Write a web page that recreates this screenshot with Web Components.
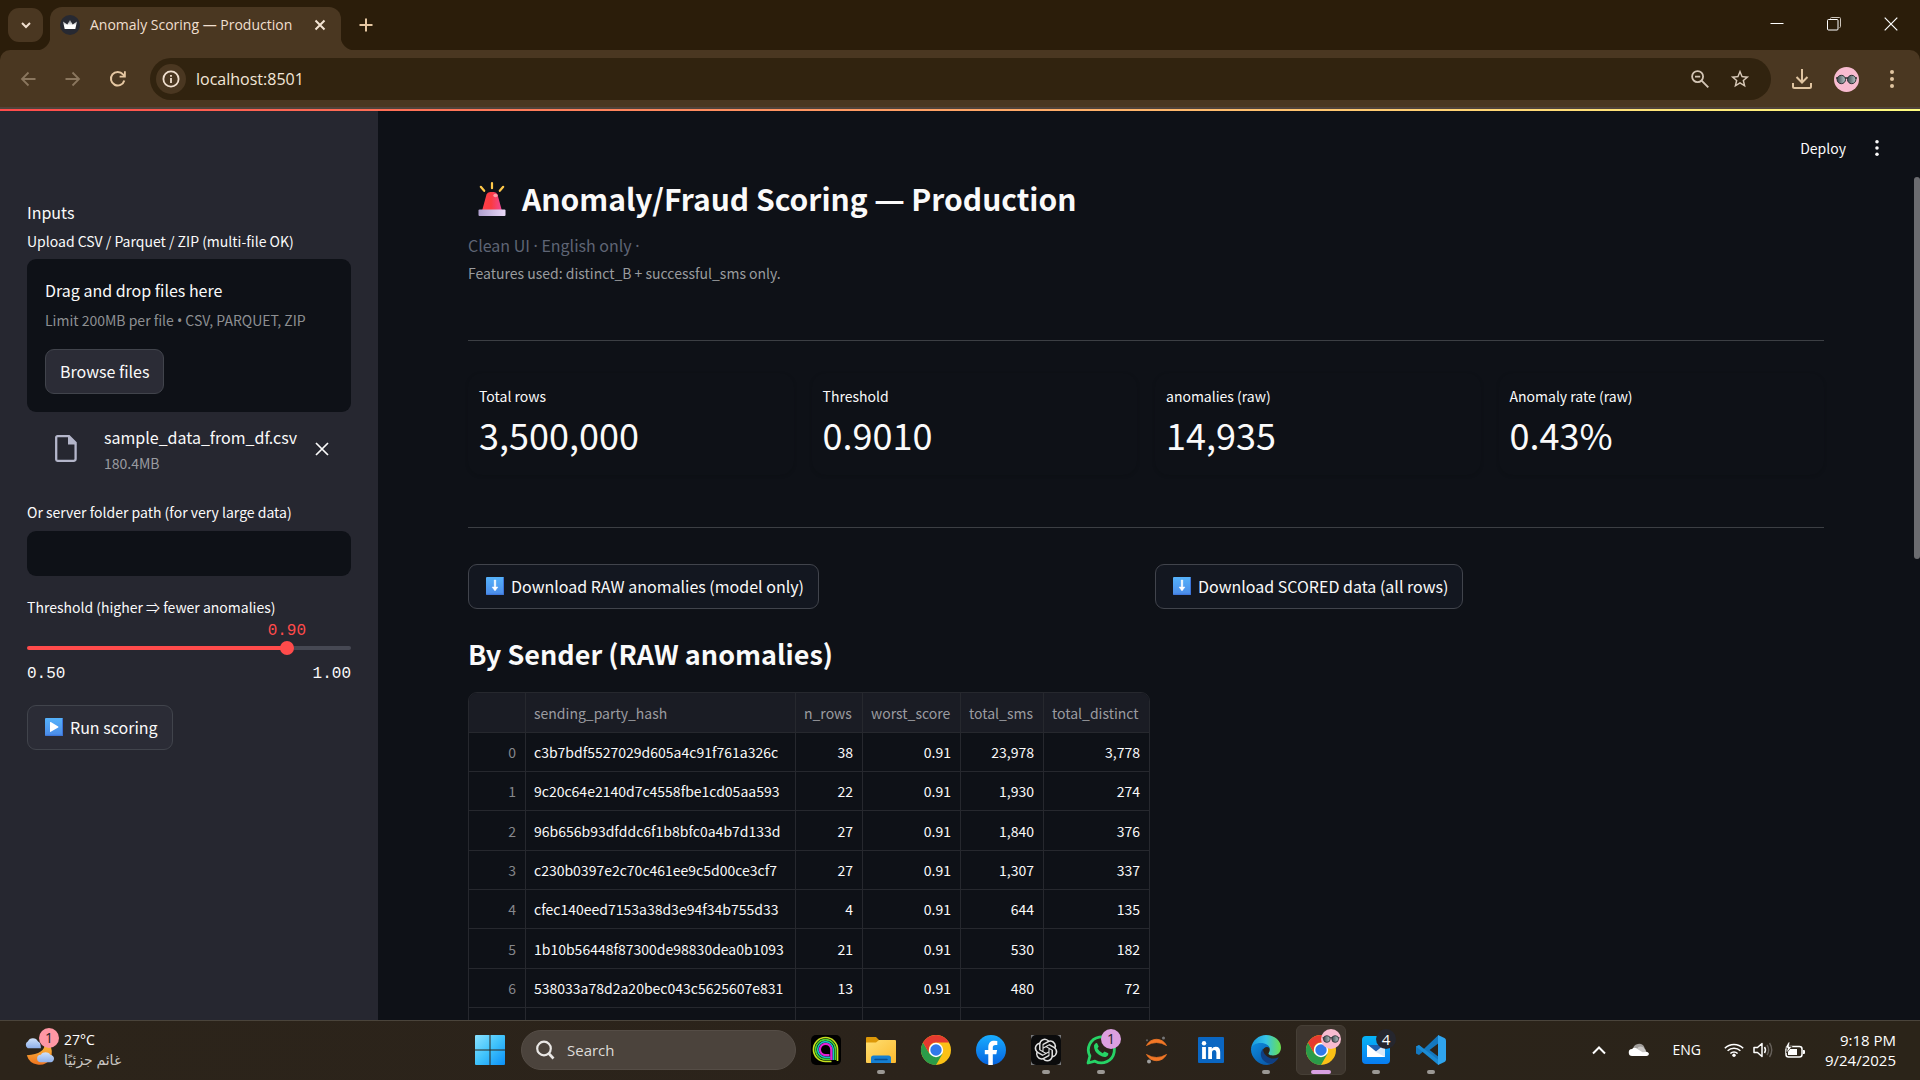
<!DOCTYPE html>
<html lang="en">
<head>
<meta charset="utf-8">
<title>Anomaly Scoring — Production</title>
<style>
  html, body { margin: 0; height: 100%; background: #0e1117; overflow: hidden; }
  body {
    --app-font: "Noto Sans CJK SC", "Open Sans", sans-serif;
    --os-font: "Open Sans", "Noto Sans", "DejaVu Sans", sans-serif;
    --mono-font: "Liberation Mono", "DejaVu Sans Mono", monospace;
    color: #fafafa;
    font-family: var(--app-font);
  }
</style>
</head>
<body>
<desktop-screen></desktop-screen>

<script>
const ICONS = {
  chevronDown: ['0 0 12 12', '<path d="M2 4l4 4 4-4" fill="none" stroke="#f0dfcf" stroke-width="2"/>'],
  crown: ['0 0 20 20', '<defs><linearGradient id="c" x2="0" y2="1"><stop offset="0" stop-color="#8a8f96"/><stop offset=".6" stop-color="#fff"/></linearGradient></defs><circle cx="10" cy="10" r="10" fill="#272932"/><path d="M3 6.500l4.300 3L10 5l2.700 4.500L17 6.500 15.300 14H4.700z" fill="url(#c)"/>'],
  tabClose: ['0 0 12 12', '<path d="M1.500 1.500l9 9m0-9l-9 9" stroke="#f4e4d4" stroke-width="2"/>'],
  plus: ['0 0 14 14', '<path d="M7 .5v13M.5 7h13" stroke="#e6c7a2" stroke-width="2"/>'],
  minimize: ['0 0 14 14', '<path d="M.5 6.500h13" stroke="#fff" stroke-width="1"/>'],
  restore: ['0 0 14 14', '<path d="M3.500 1.500a1 1 0 0 1 1-1h8a1 1 0 0 1 1 1v8a1 1 0 0 1-1 1" fill="none" stroke="#ccc4ba"/><rect x=".5" y="2.500" width="10.500" height="10.500" rx="1" fill="none" stroke="#fff"/>'],
  winClose: ['0 0 14 14', '<path d="M.7.7l12.600 12.600m0-12.600L.7 13.300" stroke="#fff" stroke-width="1.200"/>'],
  back: ['0 0 16 16', '<path d="M15.500 8H2m6.500-6.500L2 8l6.500 6.500" fill="none" stroke="#8a765e" stroke-width="1.800"/>'],
  forward: ['0 0 16 16', '<path d="M.5 8H14M7.500 1.500L14 8l-6.500 6.500" fill="none" stroke="#8a765e" stroke-width="1.800"/>'],
  reload: ['0 0 16 16', '<path d="M14.300 9.500A6.800 6.800 0 1 1 13 3.400l1.500 1.600" fill="none" stroke="#e6c7a2" stroke-width="2"/><path d="M15.800.3v6.200H9.600V4.700H14V.3z" fill="#e6c7a2"/>'],
  info: ['0 0 18 18', '<circle cx="9" cy="9" r="7.600" fill="none" stroke="#f0dfcf" stroke-width="1.800"/><path d="M8.100 8h1.800v5H8.100zm0-3h1.800v1.800H8.100z" fill="#f0dfcf"/>'],
  zoomOut: ['0 0 18 18', '<circle cx="6.600" cy="6.600" r="5.500" fill="none" stroke="#d3c5b5" stroke-width="1.800"/><path d="M4 6.600h5.200M10.600 10.600l6.700 6.700" stroke="#d3c5b5" stroke-width="1.900"/>'],
  star: ['0 0 24 24', '<path d="M22 9.240l-7.190-.62L12 2 9.190 8.630 2 9.240l5.460 4.730L5.820 21 12 17.270 18.180 21l-1.630-7.030L22 9.240zM12 15.400l-3.760 2.270 1-4.280-3.320-2.880 4.380-.38L12 6.100l1.710 4.040 4.380.38-3.320 2.880 1 4.280L12 15.400z" fill="#d8c9b8"/>'],
  download: ['0 0 20 20', '<path d="M10 0v13M4.500 8L10 13.500 15.500 8M1 14v3.500q0 1.500 1.500 1.500h15q1.500 0 1.500-1.500V14" fill="none" stroke="#e0c4a0" stroke-width="2"/>'],
  avatar: ['0 0 25 25', '<defs><linearGradient id="g"><stop offset="0" stop-color="#3e4b51"/><stop offset="1" stop-color="#b8c4c6"/></linearGradient></defs><circle cx="12.500" cy="12.500" r="12.500" fill="#f8bbd0"/><path d="M2 11h21" stroke="#333" stroke-width="1.500"/><circle cx="7.300" cy="12.500" r="4.200" fill="url(#g)" stroke="#2b2f33"/><circle cx="17.700" cy="12.500" r="4.200" fill="url(#g)" stroke="#2b2f33"/>'],
  dots: ['0 0 4 18', '<g fill="currentColor"><circle cx="2" cy="2" r="2"/><circle cx="2" cy="9" r="2"/><circle cx="2" cy="16" r="2"/></g>'],
  file: ['0 0 22 27', '<path d="M2.500 1.200H14l6.600 6.600v16a2 2 0 0 1-2 2H2.500a1.300 1.300 0 0 1-1.300-1.300v-22a1.300 1.300 0 0 1 1.300-1.300z" fill="none" stroke="#b4b6ca" stroke-width="2.300"/><path d="M13 1v8.500h8.500z" fill="#b4b6ca"/>'],
  remove: ['0 0 14 14', '<path d="M1 1l12 12M13 1L1 13" stroke="#fafafa" stroke-width="1.700"/>'],
  play: ['0 0 18 18', '<defs><linearGradient id="b" x2="0" y2="1"><stop offset="0" stop-color="#55b2fb"/><stop offset="1" stop-color="#4b8be8"/></linearGradient></defs><rect width="18" height="18" rx="1" fill="url(#b)"/><path d="M.5 17.300h17V.8" stroke="#3c73d8" fill="none"/><path d="M5 4.500q0-.9.8-.4l7.400 4.300q.7.500 0 1l-7.400 4.300q-.8.500-.8-.4z" fill="#fff"/>'],
  down: ['0 0 18 18', '<defs><linearGradient id="b" x2="0" y2="1"><stop offset="0" stop-color="#55b2fb"/><stop offset="1" stop-color="#4b8be8"/></linearGradient></defs><rect width="18" height="18" rx="1" fill="url(#b)"/><path d="M.5 17.300h17V.8" stroke="#3c73d8" fill="none"/><path d="M8.200 3h1.600v7h2.200L9 14 6 10h2.200z" fill="#fff" stroke="#fff" stroke-width=".4"/>'],
  siren: ['0 0 28 34', '<defs><linearGradient id="s"><stop offset="0" stop-color="#ff3f4a"/><stop offset=".45" stop-color="#fb3b40"/><stop offset="1" stop-color="#ef4796"/></linearGradient><linearGradient id="p"><stop offset="0" stop-color="#b0a0cf"/><stop offset="1" stop-color="#ead9f8"/></linearGradient></defs><path d="M14 1.200v5M2.800 4.800l3.400 4M25.200 4.800l-3.400 4" stroke="#ffc94a" stroke-width="2.200" stroke-linecap="round"/><path d="M8.500 12.500q.8-2.500 3.600-2.500h3.800q2.800 0 3.600 2.500L24 29H4z" fill="url(#s)"/><ellipse cx="17.500" cy="13.500" rx="2.200" ry="1.800" fill="#ff9ca4"/><rect x=".5" y="27.500" width="27" height="6.500" rx="1" fill="url(#p)"/>'],
  weather: ['0 0 32 32', '<defs><linearGradient id="w" x2="0" y2="1"><stop offset="0" stop-color="#cfe2fb"/><stop offset="1" stop-color="#8fb0ea"/></linearGradient><linearGradient id="m" x2="0" y2="1"><stop offset="0" stop-color="#fdbf3d"/><stop offset="1" stop-color="#ee7420"/></linearGradient></defs><path d="M22 9q1 11-19 12.500a14 14 0 0 0 25 4q4-8-1-16.500z" fill="url(#m)"/><path d="M4 14a4 4 0 0 1 0-7 6 6 0 0 1 11 0q3 1 3 7z" fill="url(#w)"/><path d="M18 29a4 4 0 0 1 0-8 6 6 0 0 1 10 0q4 1 4 4t-3 4z" fill="url(#w)"/>'],
  windows: ['0 0 30 30', '<defs><linearGradient id="n" gradientUnits="userSpaceOnUse" x2="30" y2="30"><stop offset="0" stop-color="#8be2ff"/><stop offset=".5" stop-color="#3fc2fb"/><stop offset="1" stop-color="#0b90f8"/></linearGradient></defs><path d="M0 1a1 1 0 0 1 1-1h13.500v14.500H0zM15.500 0H29a1 1 0 0 1 1 1v13.500H15.500zM0 15.500h14.500V30H1a1 1 0 0 1-1-1zM15.500 15.500H30V29a1 1 0 0 1-1 1H15.500z" fill="url(#n)"/>'],
  search: ['0 0 20 20', '<circle cx="9" cy="8.500" r="6.800" fill="none" stroke="#e9e7e5" stroke-width="2.200"/><path d="M13.800 13.500l4.700 5" stroke="#e9e7e5" stroke-width="2.600"/>'],
  anghami: ['0 0 30 30', '<rect width="30" height="30" rx="5" fill="#000"/><g fill="none" stroke-width="1.700"><path d="M26.500 26V14.500A12 12 0 1 0 14.500 26.500h6" stroke="#c6e21e"/><path d="M24.400 25V14.500a9.900 9.900 0 1 0-9.900 9.900h5" stroke="#49d432"/><path d="M22.300 25V14.500a7.800 7.800 0 1 0-7.800 7.800h5" stroke="#17bfc7"/><path d="M20.300 25V14.500a5.700 5.700 0 1 0-5.800 5.700h4" stroke="#e321d5" stroke-width="2.200"/></g>'],
  folder: ['0 0 30 26', '<defs><linearGradient id="f" x2="1" y2="1"><stop offset="0" stop-color="#ffdf72"/><stop offset="1" stop-color="#fbb92e"/></linearGradient></defs><path d="M0 1a1 1 0 0 1 1-1h9l3 3v6H0z" fill="#dd9808"/><path d="M0 5.500h10L13 3h16a1 1 0 0 1 1 1v21a1 1 0 0 1-1 1H1a1 1 0 0 1-1-1z" fill="url(#f)"/><path d="M5 26v-5q0-2.500 2.500-2.500h15q2.500 0 2.500 2.500v5z" fill="#157fd2"/><path d="M9 22.500h12" stroke="#084e91" stroke-width="1.500" stroke-linecap="round"/>'],
  chrome: ['0 0 30 30', '<circle cx="15" cy="15" r="15" fill="#fbc116"/><path d="M2 7.500a15 15 0 0 0 13 22.500l6.500-11.200L15 15 8.500 18.800z" fill="#2b9b49"/><path d="M2 7.500A15 15 0 0 1 28 7.500H15a7.500 7.500 0 0 0-7 5l-.3 5z" fill="#e53a2f"/><circle cx="15" cy="15" r="7.200" fill="#fff"/><circle cx="15" cy="15" r="5.700" fill="#3079ea"/>'],
  facebook: ['0 0 30 30', '<defs><linearGradient id="k" x2="0" y2="1"><stop offset="0" stop-color="#19adff"/><stop offset="1" stop-color="#0563e0"/></linearGradient></defs><circle cx="15" cy="15" r="15" fill="url(#k)"/><path d="M12.300 30V19.300H8.800v-4.400h3.500v-2.300c0-5.200 2.400-6.900 6-6.900q1.800 0 3 .3v3.900h-1.700c-2.200 0-2.800 1-2.800 2.700v2.300h4.300l-.8 4.400h-3.500V30z" fill="#fff"/>'],
  gpt: ['0 0 30 30', '<rect width="30" height="30" fill="#77787a"/><rect width="30" height="30" rx="5" fill="#0b0b0c"/><path transform="translate(3.600 3.600) scale(.95)" d="M22.2819 9.8211a5.9847 5.9847 0 0 0-.5157-4.9108 6.0462 6.0462 0 0 0-6.5098-2.9A6.0651 6.0651 0 0 0 4.9807 4.1818a5.9847 5.9847 0 0 0-3.9977 2.9 6.0462 6.0462 0 0 0 .7427 7.0966 5.98 5.98 0 0 0 .511 4.9107 6.051 6.051 0 0 0 6.5146 2.9001A5.9847 5.9847 0 0 0 13.2599 24a6.0557 6.0557 0 0 0 5.7718-4.2058 5.9894 5.9894 0 0 0 3.9977-2.9001 6.0557 6.0557 0 0 0-.7475-7.0729zm-9.022 12.6081a4.4755 4.4755 0 0 1-2.8764-1.0408l.1419-.0804 4.7783-2.7582a.7948.7948 0 0 0 .3927-.6813v-6.7369l2.02 1.1686a.071.071 0 0 1 .038.052v5.5826a4.504 4.504 0 0 1-4.4945 4.4944zm-9.6607-4.1254a4.4708 4.4708 0 0 1-.5346-3.0137l.142.0852 4.783 2.7582a.7712.7712 0 0 0 .7806 0l5.8428-3.3685v2.3324a.0804.0804 0 0 1-.0332.0615L9.74 19.9502a4.4992 4.4992 0 0 1-6.1408-1.6464zM2.3408 7.8956a4.485 4.485 0 0 1 2.3655-1.9728V11.6a.7664.7664 0 0 0 .3879.6765l5.8144 3.3543-2.0201 1.1685a.0757.0757 0 0 1-.071 0l-4.8303-2.7865A4.504 4.504 0 0 1 2.3408 7.872zm16.5963 3.8558L13.1038 8.364 15.1192 7.2a.0757.0757 0 0 1 .071 0l4.8303 2.7913a4.4944 4.4944 0 0 1-.6765 8.1042v-5.6772a.79.79 0 0 0-.407-.667zm2.0107-3.0231l-.142-.0852-4.7735-2.7818a.7759.7759 0 0 0-.7854 0L9.409 9.2297V6.8974a.0662.0662 0 0 1 .0284-.0615l4.8303-2.7866a4.4992 4.4992 0 0 1 6.6802 4.66zM8.3065 12.863l-2.02-1.1638a.0804.0804 0 0 1-.038-.0567V6.0742a4.4992 4.4992 0 0 1 7.3757-3.4537l-.142.0805L8.704 5.459a.7948.7948 0 0 0-.3927.6813zm1.0976-2.3654l2.602-1.4998 2.6069 1.4998v2.9994l-2.5974 1.4997-2.6067-1.4997Z" fill="#e2e2e2"/>'],
  whatsapp: ['0 0 30 30', '<path d="M2 28l1.900-7A13 13 0 1 1 9 26.200z" fill="none" stroke="#26d366" stroke-width="2.800" stroke-linejoin="round"/><path d="M8 10.500q1-3 3-2.500l1.700 3.600-1.200 2q2 3.500 5.200 4.700l1.800-1.900 3.800 1.900q.3 2.700-2.600 3.600-2.300.7-6.500-1.900-5.600-3.600-5.200-9.500z" fill="#26d366"/>'],
  jupyter: ['0 0 30 30', '<path d="M5.500 10.500Q9 4.300 15.500 4.300t10 6.200Q15.500 4.500 5.500 10.500zM5.500 19.500q3.500 6.200 10 6.200t10-6.200q-10 6-20 0z" fill="#f37726" stroke="#f37726" stroke-width=".8"/><circle cx="22.500" cy="3" r="1.500" fill="#767677"/><circle cx="8" cy="26.500" r="2" fill="#9e9e9e"/><circle cx="6" cy="5.300" r="1.100" fill="#616262"/>'],
  linkedin: ['0 0 26 26', '<rect width="26" height="26" rx="1" fill="#0a66c2"/><circle cx="6" cy="6.300" r="2.200" fill="#fff"/><path d="M4.100 10h3.800v12H4.100zM10.200 10h3.600v1.700q1.200-2 3.900-2 4.500 0 4.500 5.300v7h-3.800v-6.300q0-2.700-2-2.700-2.400 0-2.400 2.700V22h-3.800z" fill="#fff"/>'],
  edge: ['0 0 30 30', '<defs><linearGradient id="e"><stop offset="0" stop-color="#1798de"/><stop offset=".5" stop-color="#35c3e8"/><stop offset="1" stop-color="#6be04b"/></linearGradient><linearGradient id="d" x2="1" y2="1"><stop offset="0" stop-color="#0d8ce0"/><stop offset="1" stop-color="#094d9b"/></linearGradient></defs><path d="M0 14C1 5 8 0 15 0c9 0 15 6 15 12.500 0 5-3.600 8-8 8-3 0-5.200-1.200-4.300-2.600 3.100-4.500-.7-8.400-5.700-8.400S1 11 0 14z" fill="url(#e)"/><path d="M0 14c1-4 5-6 9.500-6 5.500 0 9 2.800 9 5.200-1.500-1.700-3.500-1.700-5.500 0-5 4.800.5 12.800 9 11.800 2-.3 4-1.200 5-2A15 15 0 0 1 16 30C7 30-.3 22 0 14z" fill="url(#d)"/><path d="M12 13.800c-5.500 6 0 15 8.500 15 3-1.300 6-3.800 7.300-6.600-8.500 4-15.800-2-15.800-8.400z" fill="#103f82"/>'],
  mail: ['0 0 28 28', '<defs><linearGradient id="q" x2="0" y2="1"><stop offset="0" stop-color="#06b4f6"/><stop offset="1" stop-color="#087cf1"/></linearGradient></defs><rect width="28" height="28" rx="4" fill="url(#q)"/><rect x="5" y="9" width="18" height="12" fill="#fff"/><path d="M14 16l9-7v12z" fill="#d9e8f7"/><path d="M6 9h16l-8 6.500z" fill="#1d5fb0"/>'],
  vscode: ['0 0 30 30', '<path d="M22.500 0L7.800 14 3 10.200 0 11.500v7L3 20l4.800-4L22.500 30v-8.300L13.600 15l8.900-6.700z" fill="#1478bf"/><path d="M3 10l19.500 15V30L0 11.500z" fill="#1b8bd4"/><path d="M22 0l6.500 3Q30 3.800 30 5.500v19q0 1.700-1.500 2.500L22 30z" fill="#2fa4ee"/>'],
  chevronUp: ['0 0 14 10', '<path d="M1 8.500l6-6 6 6" fill="none" stroke="#fff" stroke-width="2"/>'],
  cloud: ['0 0 20 14', '<path d="M4 7A6 6 0 0 1 15.500 4.500L12 9z" fill="#a09d9a"/><path d="M3.500 13a3.500 3.500 0 0 1-.5-7Q5 4 8 5.500l8 3q3.500 0 4 2.500-.5 2-2.500 2z" fill="#fff"/><path d="M8 5.700q2-3 5.500-1.700T17 9l-3.500.2z" fill="#c9c7c5"/>'],
  wifi: ['0 0 20 15', '<g fill="none" stroke="#fff" stroke-width="1.500"><path d="M.8 6.200a13 13 0 0 1 18.400 0M3.600 8.800a9 9 0 0 1 12.800 0M6.400 11.500a5 5 0 0 1 7.200 0"/></g><circle cx="10" cy="13.300" r="1.700" fill="#fff"/>'],
  speaker: ['0 0 20 16', '<path d="M1 5.500h3.500L9 1.500v13l-4.500-4H1z" fill="none" stroke="#fff" stroke-width="1.500" stroke-linejoin="round"/><path d="M11.500 5q2 3 0 6" fill="none" stroke="#fff" stroke-width="1.500"/><path d="M14 3q3.300 5 0 10M16.500 1q4.500 7 0 14" fill="none" stroke="#66605a" stroke-width="1.400"/>'],
  battery: ['0 0 20 16', '<rect x="1" y="4.500" width="16" height="10.500" rx="2.500" fill="none" stroke="#fff" stroke-width="1.500"/><path d="M18 8h1q1 0 1 1v2q0 1-1 1h-1zM3 7h9v6H3z" fill="#fff"/><path d="M3.500 0L0 6h2.500L1.500 11 7 4.500H4L5 0z" fill="#fff" stroke="#2b241a" stroke-width=".7"/>']
};

/* Base class: clones its template into an open shadow root. */
class BaseElement extends HTMLElement {
  constructor() {
    super();
    const t = document.createElement('template');
    t.innerHTML = '<style>*,*::before{box-sizing:border-box}button{font:inherit;color:inherit;background:none;border:0;padding:0;margin:0}' +
      this.constructor.css + '</style>' + this.constructor.html;
    this.attachShadow({ mode: 'open' }).append(t.content.cloneNode(true));
  }
}
const define = (tag, css, html) =>
  customElements.define(tag, class extends BaseElement { static css = css; static html = html; });

customElements.define('ui-icon', class extends HTMLElement {
  connectedCallback() {
    if (this.shadowRoot) return;
    const [box, body] = ICONS[this.getAttribute('name')];
    const [, , bw, bh] = box.split(' ');
    const w = this.getAttribute('w') || bw, h = this.getAttribute('h') || bh;
    this.attachShadow({ mode: 'open' }).innerHTML =
      `<style>:host{display:inline-block;flex:none;width:${w}px;height:${h}px}svg{display:block;width:100%;height:100%;overflow:visible}</style>` +
      `<svg viewBox="${box}" aria-hidden="true">${body}</svg>`;
  }
});

/* ---------- Browser window ---------- */
define('browser-tabs', `
  :host { display: flex; height: 50px; padding-left: 8px; background: #2b1d0a; font-family: var(--os-font); color: #f0dfcf; }
  .search { align-self: center; display: grid; place-items: center; width: 35px; height: 34px; border-radius: 11px; background: #4a3721; }
  .tab { position: relative; display: flex; align-items: center; gap: 10px; width: 291px; margin: 7px 0 0 7px; padding: 0 15px 7px 10px; border-radius: 12px 12px 0 0; background: #4a3721; }
  .tab::before, .tab::after { content: ""; position: absolute; bottom: 0; width: 14px; height: 14px; }
  .tab::before { right: 100%; background: radial-gradient(circle at 0 0, transparent 14px, #4a3721 15px); }
  .tab::after { left: 100%; background: radial-gradient(circle at 100% 0, transparent 14px, #4a3721 15px); }
  .title { flex: 1; font-size: 14px; line-height: 20px; white-space: nowrap; }
  .new { display: grid; place-items: center; width: 50px; }
  .win { display: flex; margin-left: auto; padding-right: 1px; }
  .win button { display: grid; place-items: center; width: 57px; height: 48px; }
`, `
  <button class="search" aria-label="Search tabs"><ui-icon name="chevronDown"></ui-icon></button>
  <div class="tab"><ui-icon name="crown"></ui-icon><span class="title"><slot></slot></span><button aria-label="Close tab"><ui-icon name="tabClose"></ui-icon></button></div>
  <button class="new" aria-label="New tab"><ui-icon name="plus"></ui-icon></button>
  <div class="win"><button aria-label="Minimize"><ui-icon name="minimize"></ui-icon></button><button aria-label="Restore"><ui-icon name="restore"></ui-icon></button><button aria-label="Close"><ui-icon name="winClose"></ui-icon></button></div>
`);

define('browser-toolbar', `
  :host { display: block; background: #2b1d0a; font-family: var(--os-font); }
  .bar { display: flex; align-items: center; height: 59px; padding: 1px 6px 0 5px; border-radius: 10px 10px 0 0; background: #4a3721; border-bottom: 2px solid #50433b; }
  .nav { display: grid; place-items: center; width: 45px; height: 42px; color: #e0c4a0; }
  .box { flex: 1; display: flex; align-items: center; height: 42px; margin: 0 13px 0 10px; padding: 0 13px 0 6px; border-radius: 21px; background: #31230f; }
  .info { display: grid; place-items: center; width: 30px; height: 30px; border-radius: 50%; background: #4a3721; }
  input { flex: 1; min-width: 0; margin-left: 10px; padding: 0; border: 0; outline: 0; background: none; color: #f3e6d8; font: 16px/22px var(--os-font); }
  .act { display: grid; place-items: center; width: 36px; }
  .act + .act { margin-left: 4px; }
  .box + .act { margin-right: 4px; }
`, `
  <div class="bar">
    <button class="nav" aria-label="Back"><ui-icon name="back"></ui-icon></button>
    <button class="nav" aria-label="Forward"><ui-icon name="forward"></ui-icon></button>
    <button class="nav" aria-label="Reload"><ui-icon name="reload"></ui-icon></button>
    <div class="box">
      <button class="info" aria-label="Site information"><ui-icon name="info"></ui-icon></button>
      <input type="text" aria-label="Address" value="localhost:8501">
      <button class="act" aria-label="Zoom"><ui-icon name="zoomOut"></ui-icon></button>
      <button class="act" aria-label="Bookmark"><ui-icon name="star" w="22" h="22"></ui-icon></button>
    </div>
    <button class="act" aria-label="Downloads"><ui-icon name="download"></ui-icon></button>
    <button class="nav" aria-label="Profile"><ui-icon name="avatar"></ui-icon></button>
    <button class="nav" aria-label="Menu"><ui-icon name="dots"></ui-icon></button>
  </div>
`);

/* ---------- Application widgets ---------- */
define('app-button', `
  :host { display: inline-block; }
  button { display: flex; align-items: center; gap: 7px; height: 45px; padding: 0 14px 2px; border: 1px solid #41444c; border-radius: 9px; background: var(--button-bg, #131720); font-size: 16px; line-height: 24px; white-space: nowrap; }
  ::slotted(ui-icon) { margin: 1px 0 0 3px; }
`, `<button><slot name="icon"></slot><span><slot></slot></span></button>`);

define('file-uploader', `
  :host { display: block; }
  .label { display: block; font-size: 14px; line-height: 22px; }
  .zone { margin-top: 7px; padding: 17px 18px 18px; border-radius: 9px; background: #0e1117; }
  .zone b { display: block; font-weight: 400; font-size: 16px; line-height: 29px; }
  .zone small { display: block; margin: 4px 0 17px; font-size: 14px; line-height: 22px; color: #8d8f92; }
  .dot { font-family: "Noto Sans", sans-serif; }
  app-button { display: block; width: max-content; --button-bg: #2b2c36; }
  .file { display: flex; align-items: center; padding: 9px 0 0 28px; }
  .file div { flex: 1; margin-left: 27px; padding-top: 3px; font-size: 16px; line-height: 26px; }
  .file small { display: block; font-size: 14px; color: #9a9ba0; }
  .file button { display: grid; place-items: center; width: 14px; height: 24px; margin-right: 22px; }
`, `
  <span class="label"><slot></slot></span>
  <div class="zone"><b>Drag and drop files here</b><small>Limit 200MB per file <span class="dot">•</span> CSV, PARQUET, ZIP</small><app-button>Browse files</app-button></div>
  <div class="file"><ui-icon name="file"></ui-icon><div>sample_data_from_df.csv<small>180.4MB</small></div><button aria-label="Remove file"><ui-icon name="remove"></ui-icon></button></div>
`);

define('text-field', `
  :host { display: block; }
  label { display: block; font-size: 14px; line-height: 22px; }
  input { display: block; width: 100%; height: 45px; margin-top: 8px; padding: 0 13px; border: 0; border-radius: 9px; outline: 0; background: #0e1117; color: inherit; font: 16px/24px var(--app-font); }
`, `<label for="f"><slot></slot></label><input id="f" type="text">`);

define('range-slider', `
  :host { display: block; --pos: 80.2%; }
  label { display: block; font-size: 14px; line-height: 22px; }
  .track { position: relative; height: 4px; margin-top: 28px; border-radius: 2px; background: linear-gradient(90deg, #ff4b4b var(--pos), #464853 var(--pos)); }
  output { position: absolute; left: var(--pos); bottom: 9px; transform: translateX(-50%); color: #ff4b4b; }
  input { position: absolute; inset: -5px -7px; width: calc(100% + 14px); height: 14px; margin: 0; appearance: none; background: none; }
  input::-webkit-slider-thumb { appearance: none; width: 14px; height: 14px; border-radius: 50%; background: #ff4b4b; }
  .ends { display: flex; justify-content: space-between; margin-top: 14px; }
  .ends, output { font: 16px/20px var(--mono-font); }
`, `
  <label for="r"><slot></slot></label>
  <div class="track"><output for="r">0.90</output><input id="r" type="range" min="0.5" max="1" step="0.001" value="0.901"></div>
  <div class="ends"><span>0.50</span><span>1.00</span></div>
`);

define('app-sidebar', `
  :host { display: block; flex: none; width: 378px; padding: 87px 27px 0; background: #262730; }
  .head { margin: 0; font-size: 16px; line-height: 28px; }
  file-uploader { margin-top: 4px; }
  text-field { margin-top: 25px; }
  range-slider { margin-top: 20px; }
  app-button { margin-top: 21px; --button-bg: #2b2c36; }
`, `
  <p class="head">Inputs</p>
  <file-uploader>Upload CSV / Parquet / ZIP (multi-file OK)</file-uploader>
  <text-field>Or server folder path (for very large data)</text-field>
  <range-slider>Threshold (higher ⇒ fewer anomalies)</range-slider>
  <app-button><ui-icon slot="icon" name="play"></ui-icon>Run scoring</app-button>
`);

define('metric-card', `
  :host { display: block; padding: 11px; border-radius: 14px; box-shadow: 0 1px 3px rgba(12, 14, 16, .35); }
  .label { font-size: 14px; line-height: 24px; }
  .value { height: 56px; font-size: 36px; line-height: 52px; }
`, `<div class="label"><slot name="label"></slot></div><div class="value"><slot></slot></div>`);

const rows = [
  ['c3b7bdf5527029d605a4c91f761a326c', '38', '0.91', '23,978', '3,778'],
  ['9c20c64e2140d7c4558fbe1cd05aa593', '22', '0.91', '1,930', '274'],
  ['96b656b93dfddc6f1b8bfc0a4b7d133d', '27', '0.91', '1,840', '376'],
  ['c230b0397e2c70c461ee9c5d00ce3cf7', '27', '0.91', '1,307', '337'],
  ['cfec140eed7153a38d3e94f34b755d33', '4', '0.91', '644', '135'],
  ['1b10b56448f87300de98830dea0b1093', '21', '0.91', '530', '182'],
  ['538033a78d2a20bec043c5625607e831', '13', '0.91', '480', '72'],
  ['', '', '', '', '']
];
define('data-grid', `
  :host { display: block; width: max-content; border: 1px solid #26282e; border-radius: 9px 9px 0 0; overflow: hidden; }
  table { table-layout: fixed; width: 680px; border-collapse: separate; border-spacing: 0; font-size: 14px; line-height: 20px; }
  th, td { height: 39px; padding: 0 9px 0 8px; border: solid #26282e; border-width: 0 1px 1px 0; text-align: right; font-weight: 400; white-space: nowrap; }
  th:last-child, td:last-child { border-right: 0; }
  thead th { height: 40px; background: #1a1c24; color: #9a9ba0; text-align: left; }
  tbody tr:nth-child(3n) > * { height: 40px; }
  tbody th { color: #85878c; }
  td:nth-child(2) { text-align: left; }
`, `
  <table>
    <colgroup><col style="width:57px"><col style="width:270px"><col style="width:67px"><col style="width:98px"><col style="width:83px"><col style="width:105px"></colgroup>
    <thead><tr><th></th><th>sending_party_hash</th><th>n_rows</th><th>worst_score</th><th>total_sms</th><th>total_distinct</th></tr></thead>
    <tbody>${rows.map((r, i) => `<tr><th>${r[0] && i}</th>${r.map(c => `<td>${c}</td>`).join('')}</tr>`).join('')}</tbody>
  </table>
`);

define('app-main', `
  :host { position: relative; display: block; flex: 1; min-width: 0; overflow: hidden; padding: 60px 96px 0 90px; background: #0e1117; }
  header { position: absolute; top: 23px; right: 41px; display: flex; align-items: center; gap: 29px; font-size: 14px; line-height: 28px; }
  header button { display: grid; place-items: center; }
  h1 { display: flex; align-items: center; gap: 16px; margin: 0; padding-left: 10px; font-size: 30px; line-height: 54px; font-weight: 700; white-space: nowrap; }
  .dash, .dot { font-family: "Noto Sans", sans-serif; }
  .dash { font-weight: 600; }
  .lead { margin: 4px 0 0; font-size: 16px; line-height: 28px; color: #5f6575; }
  .note { margin: 0; font-size: 14px; line-height: 26px; color: #999b9e; }
  hr { height: 1px; margin: 0; border: 0; background: #3c3f44; }
  .first { margin-top: 54px; }
  .metrics { display: grid; grid-template-columns: repeat(4, 1fr); gap: 18px; padding: 32px 0 52px; }
  .downloads { display: grid; grid-template-columns: 1fr 1fr; gap: 18px; margin-top: 36px; }
  h2 { margin: 21px 0 14px; font-size: 27px; line-height: 48px; font-weight: 700; }
  .scroll { position: absolute; top: 66px; right: 0; width: 6px; height: 42%; border-radius: 3px; background: #6b6c70; }
`, `
  <header><button>Deploy</button><button aria-label="Menu"><ui-icon name="dots" h="16"></ui-icon></button></header>
  <h1><ui-icon name="siren"></ui-icon><span>Anomaly/Fraud Scoring <span class="dash">—</span> Production</span></h1>
  <p class="lead">Clean UI <span class="dot">·</span> English only <span class="dot">·</span></p>
  <p class="note">Features used: distinct_B + successful_sms only.</p>
  <hr class="first">
  <div class="metrics">
    <metric-card><span slot="label">Total rows</span>3,500,000</metric-card>
    <metric-card><span slot="label">Threshold</span>0.9010</metric-card>
    <metric-card><span slot="label">anomalies (raw)</span>14,935</metric-card>
    <metric-card><span slot="label">Anomaly rate (raw)</span>0.43%</metric-card>
  </div>
  <hr>
  <div class="downloads">
    <app-button><ui-icon slot="icon" name="down"></ui-icon>Download RAW anomalies (model only)</app-button>
    <app-button><ui-icon slot="icon" name="down"></ui-icon>Download SCORED data (all rows)</app-button>
  </div>
  <h2>By Sender (RAW anomalies)</h2>
  <data-grid></data-grid>
  <div class="scroll"></div>
`);

/* ---------- Taskbar ---------- */
define('task-item', `
  :host { position: relative; display: grid; place-items: center; width: 55px; height: 57px; }
  button { display: grid; place-items: center; width: 50px; height: 50px; border: 1px solid transparent; border-radius: 6px; }
  :host([running])::after { content: ""; position: absolute; bottom: 4px; left: 50%; width: 8px; height: 4px; margin-left: -4px; border-radius: 2px; background: #9b9894; }
  :host([active])::after { width: 20px; margin-left: -10px; background: #d9a0e2; }
  :host([active]) button { background: #3d352d; border-color: #463f36; }
  ::slotted([slot=badge]) { position: absolute; top: 8px; left: 28px; display: grid; place-items: center; width: 20px; height: 20px; border-radius: 50%; }
`, `<button><slot></slot></button><slot name="badge"></slot>`);

define('task-bar', `
  :host { box-sizing: border-box; display: grid; grid-template-columns: 1fr auto 1fr; align-items: center; height: 60px; flex: none; padding-bottom: 2px; border-top: 1px solid #4a443b; background: linear-gradient(90deg, #2c241a, #2b231b 50%, #2b2419); font: 15px/20px var(--os-font); color: #fff; }
  .weather { position: relative; display: flex; align-items: center; gap: 10px; padding-left: 24px; font-size: 14px; text-align: left; }
  .weather div { white-space: nowrap; }
  .weather small { display: block; font-size: 14px; color: #c9c6c2; direction: rtl; }
  .badge { font-size: 14px; line-height: 20px; color: #222; background: #dc9fe0; }
  .weather .badge { position: absolute; left: 39px; top: -2px; width: 20px; height: 20px; border-radius: 50%; text-align: center; background: #ff97a4; }
  .dark { background: #25262e; color: #fff; font-size: 15px; }
  .center, .tray { display: flex; align-items: center; }
  .find { display: flex; align-items: center; gap: 12px; width: 275px; height: 40px; margin: 0 2px 0 4px; padding: 0 13px; border-radius: 20px; background: #4b433c; border: 1px solid #554d46; }
  .find input { width: 100%; min-width: 0; padding: 0; border: 0; outline: 0; background: none; color: #fff; font: inherit; }
  .find input::placeholder { color: #dedbd8; }
  .tray { justify-content: flex-end; padding-right: 24px; font-size: 14px; }
  .tray > * { margin-left: 9px; }
  .tray .cloud { margin-left: 23px; }
  .tray .lang, .tray .wifi { margin-left: 23px; }
  .tray .battery { margin-left: 12px; }
  .tray .clock { margin-left: 20px; font-size: 15px; text-align: right; }
`, `
  <button class="weather"><ui-icon name="weather" w="30" h="30"></ui-icon><span class="badge">1</span><div>27°C<small lang="ar">غائم جزئيًا</small></div></button>
  <div class="center">
    <task-item><ui-icon name="windows"></ui-icon></task-item>
    <div class="find"><ui-icon name="search"></ui-icon><input type="text" placeholder="Search" aria-label="Search"></div>
    <task-item><ui-icon name="anghami"></ui-icon></task-item>
    <task-item running><ui-icon name="folder"></ui-icon></task-item>
    <task-item><ui-icon name="chrome"></ui-icon></task-item>
    <task-item><ui-icon name="facebook"></ui-icon></task-item>
    <task-item running><ui-icon name="gpt"></ui-icon></task-item>
    <task-item running><ui-icon name="whatsapp"></ui-icon><span slot="badge" class="badge">1</span></task-item>
    <task-item><ui-icon name="jupyter"></ui-icon></task-item>
    <task-item><ui-icon name="linkedin"></ui-icon></task-item>
    <task-item running><ui-icon name="edge"></ui-icon></task-item>
    <task-item running active><ui-icon name="chrome"></ui-icon><ui-icon slot="badge" name="avatar" w="20" h="20"></ui-icon></task-item>
    <task-item running><ui-icon name="mail"></ui-icon><span slot="badge" class="badge dark">4</span></task-item>
    <task-item running><ui-icon name="vscode"></ui-icon></task-item>
  </div>
  <div class="tray">
    <ui-icon name="chevronUp"></ui-icon><ui-icon class="cloud" name="cloud"></ui-icon><span class="lang">ENG</span>
    <ui-icon class="wifi" name="wifi"></ui-icon><ui-icon name="speaker"></ui-icon><ui-icon class="battery" name="battery"></ui-icon>
    <div class="clock">9:18 PM<br>9/24/2025</div>
  </div>
`);

define('desktop-screen', `
  :host { display: flex; flex-direction: column; height: 100vh; min-width: 1400px; }
  .line { flex: none; height: 2px; background: linear-gradient(90deg, #ff4b4b, #fffd80); }
  .page { flex: 1; min-height: 0; display: flex; overflow: hidden; }
  app-sidebar { box-sizing: border-box; }
`, `
  <browser-tabs>Anomaly Scoring — Production</browser-tabs>
  <browser-toolbar></browser-toolbar>
  <div class="line"></div>
  <div class="page"><app-sidebar></app-sidebar><app-main></app-main></div>
  <task-bar></task-bar>
`);
</script>
</body>
</html>
